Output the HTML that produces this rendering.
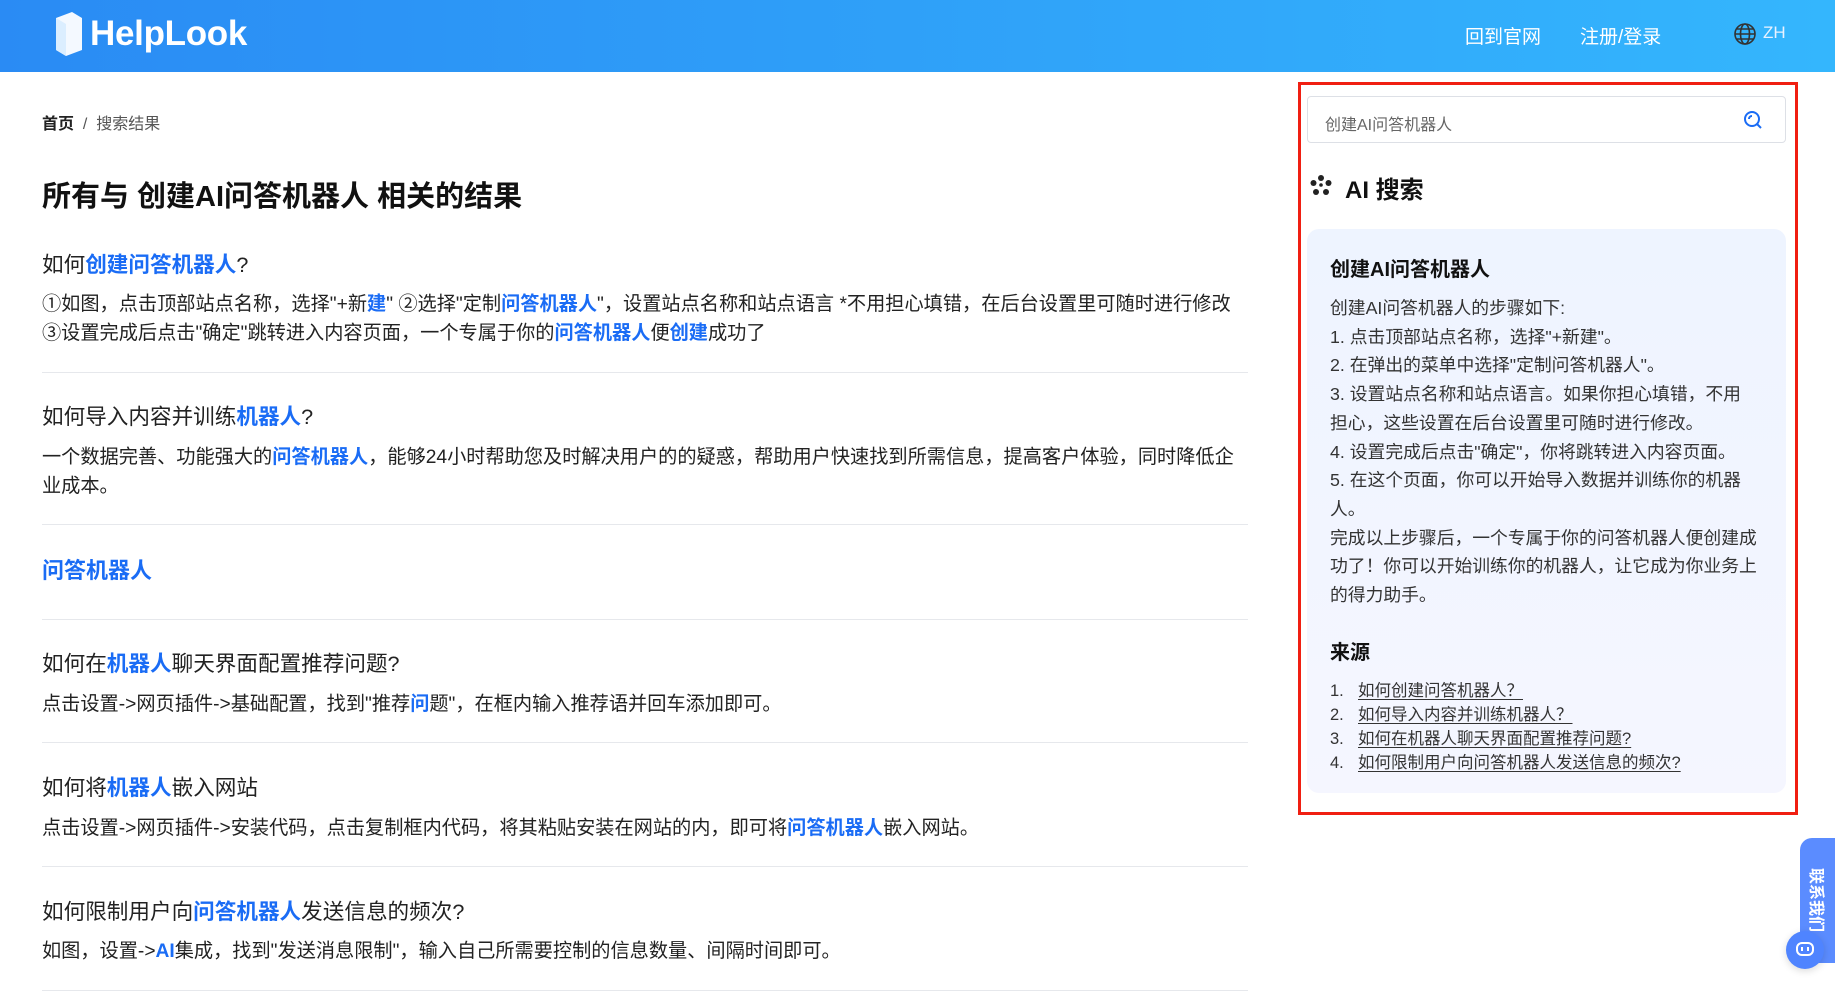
<!DOCTYPE html>
<html><head><meta charset="utf-8"><style>
*{margin:0;padding:0;box-sizing:border-box}
body{width:1835px;height:1005px;overflow:hidden;background:#fff;font-family:"Liberation Sans","Noto Sans CJK SC",sans-serif;color:#222;position:relative}
.hd{position:absolute;left:0;top:0;width:1835px;height:72px;background:linear-gradient(90deg,#2a8bf4,#34b6fd)}
.logo{position:absolute;top:14px;color:#fff;font-size:35px;font-weight:bold;letter-spacing:-0.3px}
.nav{position:absolute;top:22px;color:#fff;font-size:19px}
.a{position:absolute;left:42px}
.bc{top:110px;font-size:16px;color:#555}
.bc b{color:#222}
h1{position:absolute;left:42px;top:173px;font-size:29px;font-weight:bold;color:#111}
.h{font-size:21.6px;color:#222}
.t{font-size:19.2px;color:#222;line-height:29px;width:1215px}
.bl{color:#1a6cf5;font-weight:bold}
.dv{position:absolute;left:42px;width:1206px;border-top:1px solid #e6e8ec}
.red{position:absolute;left:1298px;top:82px;width:500px;height:733px;border:3px solid #f01f12}
.sb{position:absolute;left:1307px;top:96px;width:479px;height:47px;border:1px solid #dde0e6;border-radius:4px;font-size:16px;color:#666;padding:14px 0 0 17px}
.ai{position:absolute;left:1310px;top:170px;font-size:24px;font-weight:bold;color:#111}
.card{position:absolute;left:1307px;top:229px;width:479px;height:564px;background:linear-gradient(#eef4ff,#f5f6ff);border-radius:12px;padding:24px 0 0 23px}
.card .ti{font-size:20px;font-weight:bold;color:#111;margin-bottom:12px}
.card .bd{font-size:17.8px;line-height:28.7px;color:#333;width:427px}
.card .so{font-size:20px;font-weight:bold;color:#111;margin-top:26px;margin-bottom:14px}
.card ol{list-style:none;font-size:16.5px;line-height:24px;color:#333}
.card ol span{display:inline-block;width:28px}
.card ol u{text-underline-offset:3px}
.fl{position:absolute;left:1800px;top:838px;width:40px;height:125px;background:#5b8cff;border-radius:12px 0 0 0}
.fl span{position:absolute;left:-22px;top:50px;width:80px;color:#fff;font-size:16px;font-weight:bold;transform:rotate(90deg);white-space:nowrap;text-align:center}
.ci{position:absolute;left:1786px;top:931px;width:38px;height:38px;border-radius:50%;background:#4f84ff;box-shadow:0 2px 8px rgba(0,0,0,.15)}
</style></head><body>
<div class="hd">
<svg style="position:absolute;left:52px;top:10px" width="34" height="46" viewBox="0 0 34 46"><path d="M4 8 L20 2 L30 8 L30 40 L14 46 L4 40Z" fill="#fff" opacity=".95"/><path d="M4 8 L14 14 L14 46 L4 40Z" fill="#dbeeff"/></svg>
<div class="logo" style="left:90px">HelpLook</div>
<div class="nav" style="left:1465px">回到官网</div>
<div class="nav" style="left:1580px">注册/登录</div>
<svg style="position:absolute;left:1733px;top:22px" width="24" height="24" viewBox="0 0 24 24" fill="none" stroke="#333" stroke-width="1.6"><circle cx="12" cy="12" r="10"/><ellipse cx="12" cy="12" rx="4.5" ry="10"/><path d="M2 12h20M4 7h16M4 17h16"/></svg>
<div class="nav" style="left:1763px;color:#e8f2ff;font-size:17px;top:23px">ZH</div>
</div>

<div class="a bc"><b>首页</b> &nbsp;/&nbsp; 搜索结果</div>
<h1>所有与 创建AI问答机器人 相关的结果</h1>

<div class="a h" style="top:248px">如何<span class="bl">创建问答机器人</span>?</div>
<div class="a t" style="top:290px">①如图，点击顶部站点名称，选择"+新<span class="bl">建</span>" ②选择"定制<span class="bl">问答机器人</span>"，设置站点名称和站点语言 *不用担心填错，在后台设置里可随时进行修改<br>③设置完成后点击"确定"跳转进入内容页面，一个专属于你的<span class="bl">问答机器人</span>便<span class="bl">创建</span>成功了</div>
<div class="dv" style="top:372px"></div>

<div class="a h" style="top:400px">如何导入内容并训练<span class="bl">机器人</span>?</div>
<div class="a t" style="top:443px;width:1200px">一个数据完善、功能强大的<span class="bl">问答机器人</span>，能够24小时帮助您及时解决用户的的疑惑，帮助用户快速找到所需信息，提高客户体验，同时降低企业成本。</div>
<div class="dv" style="top:524px"></div>

<div class="a h bl" style="top:553px;font-size:22px">问答机器人</div>
<div class="dv" style="top:619px"></div>

<div class="a h" style="top:647px">如何在<span class="bl">机器人</span>聊天界面配置推荐问题?</div>
<div class="a t" style="top:690px">点击设置->网页插件->基础配置，找到"推荐<span class="bl">问</span>题"，在框内输入推荐语并回车添加即可。</div>
<div class="dv" style="top:742px"></div>

<div class="a h" style="top:771px">如何将<span class="bl">机器人</span>嵌入网站</div>
<div class="a t" style="top:814px">点击设置->网页插件->安装代码，点击复制框内代码，将其粘贴安装在网站的内，即可将<span class="bl">问答机器人</span>嵌入网站。</div>
<div class="dv" style="top:866px"></div>

<div class="a h" style="top:895px">如何限制用户向<span class="bl">问答机器人</span>发送信息的频次?</div>
<div class="a t" style="top:937px">如图，设置-><span class="bl">AI</span>集成，找到"发送消息限制"，输入自己所需要控制的信息数量、间隔时间即可。</div>
<div class="dv" style="top:990px"></div>

<div class="red"></div>
<div class="sb">创建AI问答机器人
<svg style="position:absolute;right:22px;top:13px" width="20" height="20" viewBox="0 0 20 20" fill="none" stroke="#1a6cf5" stroke-width="2"><circle cx="9" cy="9" r="7"/><path d="M14 14l4 4M6 9a3 3 0 0 1 3-3"/></svg></div>
<svg style="position:absolute;left:1310px;top:174px" width="22" height="22" viewBox="0 0 22 22" fill="#222"><circle cx="11" cy="4" r="3"/><circle cx="3.5" cy="9" r="3"/><circle cx="18.5" cy="9" r="3"/><circle cx="6" cy="18" r="3"/><circle cx="16" cy="18" r="3"/><circle cx="11" cy="11" r="1.8"/></svg>
<div class="ai" style="left:1345px">AI 搜索</div>
<div class="card">
<div class="ti">创建AI问答机器人</div>
<div class="bd">创建AI问答机器人的步骤如下:<br>1. 点击顶部站点名称，选择"+新建"。<br>2. 在弹出的菜单中选择"定制问答机器人"。<br>3. 设置站点名称和站点语言。如果你担心填错，不用担心，这些设置在后台设置里可随时进行修改。<br>4. 设置完成后点击"确定"，你将跳转进入内容页面。<br>5. 在这个页面，你可以开始导入数据并训练你的机器人。<br>完成以上步骤后，一个专属于你的问答机器人便创建成功了！你可以开始训练你的机器人，让它成为你业务上的得力助手。</div>
<div class="so">来源</div>
<ol>
<li><span>1.</span><u>如何创建问答机器人？</u></li>
<li><span>2.</span><u>如何导入内容并训练机器人？</u></li>
<li><span>3.</span><u>如何在机器人聊天界面配置推荐问题?</u></li>
<li><span>4.</span><u>如何限制用户向问答机器人发送信息的频次?</u></li>
</ol>
</div>
<div class="fl"><span>联系我们</span></div>
<div class="ci"><svg style="position:absolute;left:10px;top:11px" width="18" height="16" viewBox="0 0 18 16" fill="none" stroke="#fff" stroke-width="2"><rect x="1" y="1" width="16" height="12" rx="5"/><path d="M6 5v4M12 5v4"/></svg></div>
</body></html>
